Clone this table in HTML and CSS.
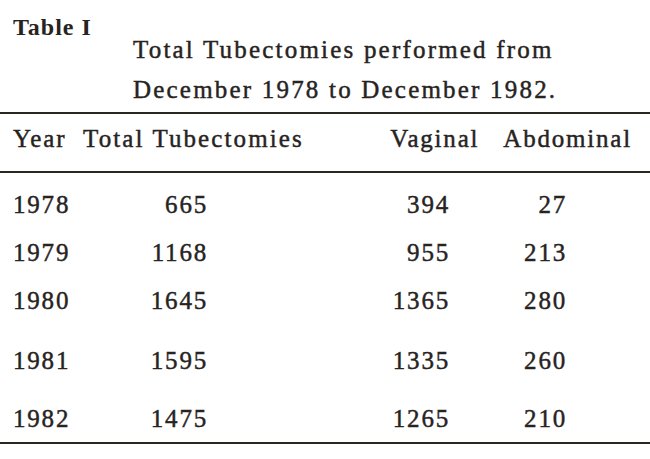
FILE: index.html
```html
<!DOCTYPE html>
<html lang="en">
<head>
<meta charset="utf-8">
<title>Table I</title>
<link rel="stylesheet" href="styles.css">
</head>
<body>
<div class="sheet">
  <div class="head">
    <div class="caption">Table I</div>
    <div class="title">
      <div class="title-line">Total Tubectomies performed from</div>
      <div class="title-line">December 1978 to December 1982.</div>
    </div>
  </div>
  <div class="colhead">
    <span class="h-year">Year</span>
    <span class="h-total">Total Tubectomies</span>
    <span class="h-vag">Vaginal</span>
    <span class="h-abd">Abdominal</span>
  </div>
  <div class="body">
    <div class="row"><span class="c-year">1978</span><span class="c-total">665</span><span class="c-vag">394</span><span class="c-abd">27</span></div>
    <div class="row"><span class="c-year">1979</span><span class="c-total">1168</span><span class="c-vag">955</span><span class="c-abd">213</span></div>
    <div class="row"><span class="c-year">1980</span><span class="c-total">1645</span><span class="c-vag">1365</span><span class="c-abd">280</span></div>
    <div class="row row-4"><span class="c-year">1981</span><span class="c-total">1595</span><span class="c-vag">1335</span><span class="c-abd">260</span></div>
    <div class="row row-5"><span class="c-year">1982</span><span class="c-total">1475</span><span class="c-vag">1265</span><span class="c-abd">210</span></div>
  </div>
</div>
</body>
</html>
```

FILE: styles.css
```css
html, body {
  margin: 0;
  padding: 0;
  background: #ffffff;
}

.sheet {
  width: 650px;
  height: 459px;
  font-family: "Liberation Serif", "Times New Roman", serif;
  font-size: 25px;
  letter-spacing: 1.8px;
  color: #27231f;
  -webkit-text-stroke: 0.45px #27231f;
  overflow: hidden;
}

.head {
  display: flex;
  align-items: flex-start;
  height: 112px;
  border-bottom: 2px solid #2a2622;
}

.caption {
  flex: 0 0 133px;
  box-sizing: border-box;
  padding: 12px 0 0 13px;
  font-size: 24px;
  font-weight: bold;
  letter-spacing: 1px;
  line-height: 30px;
  -webkit-text-stroke: 0;
}

.title {
  padding-top: 30px;
  line-height: 40px;
  letter-spacing: 2.2px;
  white-space: nowrap;
}

.colhead {
  display: flex;
  align-items: baseline;
  box-sizing: border-box;
  height: 59px;
  padding: 10px 18px 0 13px;
  line-height: 30px;
  white-space: nowrap;
  border-bottom: 2px solid #2a2622;
}

.h-year {
  flex: 0 0 70px;
}

.h-total {
  flex: 1 1 auto;
  letter-spacing: 2.1px;
}

.h-abd {
  margin-left: 24px;
}

.body {
  padding-top: 8px;
  border-bottom: 2px solid #2a2622;
}

.row {
  display: grid;
  grid-template-columns: 70px 125px 242px 117px;
  padding-left: 13px;
  line-height: 48px;
  white-space: nowrap;
}

.row-4 {
  margin-top: 12px;
}

.row-5 {
  margin-top: 11px;
  line-height: 46px;
}

.c-total,
.c-vag,
.c-abd {
  text-align: right;
}
```
